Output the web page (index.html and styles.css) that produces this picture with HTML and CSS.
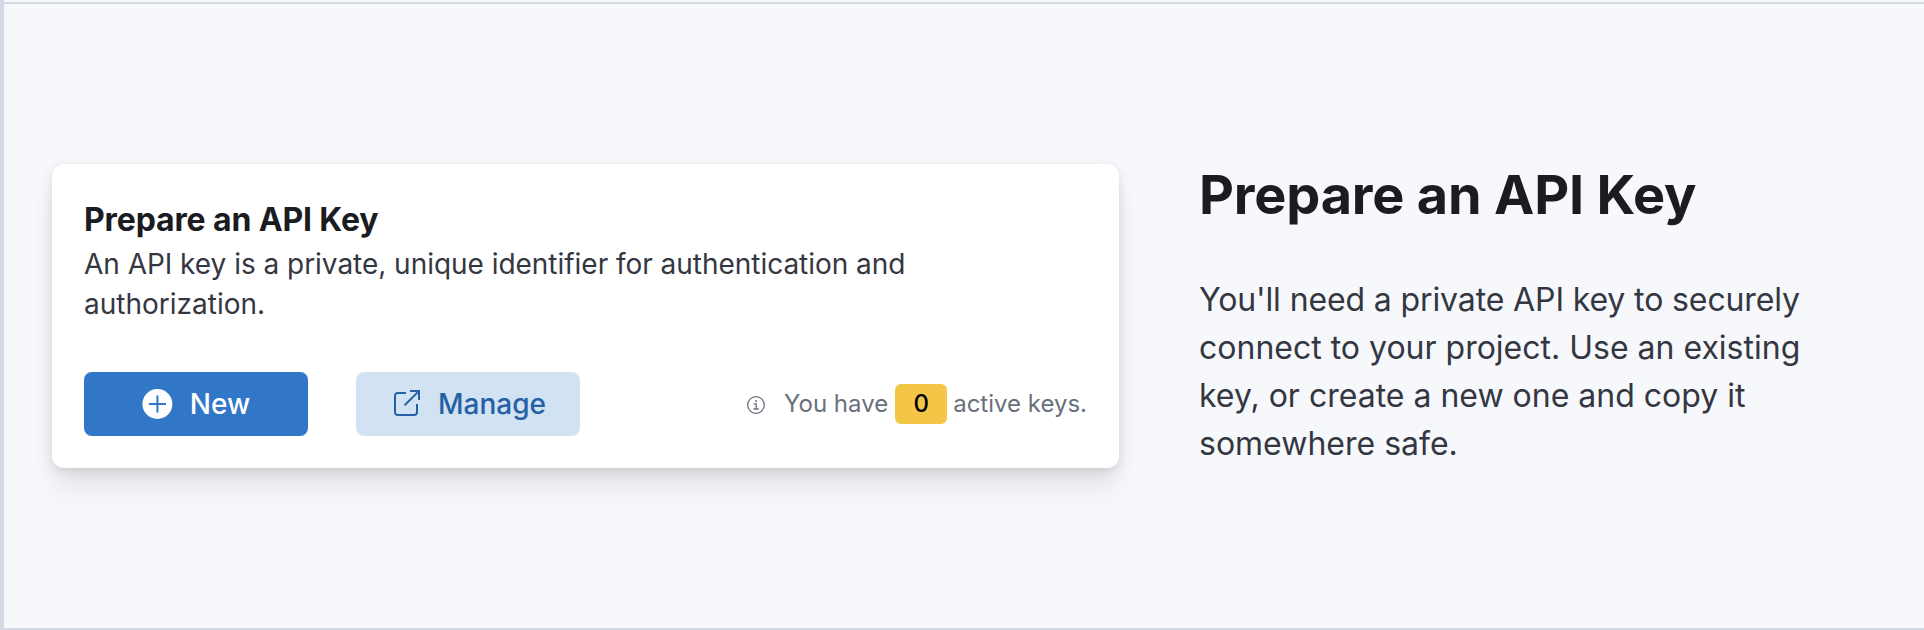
FILE: index.html
```html
<!DOCTYPE html>
<html lang="en">
<head>
<meta charset="utf-8">
<title>Prepare an API Key</title>
<link rel="stylesheet" href="styles.css">
</head>
<body>
<main class="section">
  <section class="panel">
    <h3 class="panel-title">Prepare an API Key</h3>
    <p class="panel-text">An API key is a private, unique identifier for authentication and authorization.</p>
    <div class="actions">
      <button class="button button-fill">
        <svg class="icon" viewBox="0 0 16 16"><circle cx="7.7" cy="8" r="7.5" fill="#fff"/><path d="M7.7 3.7v8.6M3.4 8h8.6" stroke="#3276c8" stroke-width="1"/></svg>
        <span>New</span>
      </button>
      <button class="button button-light">
        <svg class="icon" viewBox="0 0 16 16" fill="none" stroke="currentColor"><path d="M8 2.5H4A1.5 1.5 0 0 0 2.5 4v8A1.5 1.5 0 0 0 4 13.5h8a1.5 1.5 0 0 0 1.5-1.5V8"/><path d="M10 1.5h4.5V6M14.3 1.7 7.3 8.6"/></svg>
        <span>Manage</span>
      </button>
      <div class="status">
        <svg class="status-icon" viewBox="0 0 18 18" fill="none" stroke="currentColor" stroke-width="1.3"><circle cx="9" cy="9" r="8.3"/><path d="M6.6 7.8h2.6v5M6.4 13h5.4"/><circle cx="9" cy="5" r="1" fill="currentColor" stroke="none"/></svg>
        <span>You have</span><span class="badge">0</span><span>active keys.</span>
      </div>
    </div>
  </section>
  <section class="intro">
    <h2 class="intro-title">Prepare an API Key</h2>
    <p class="intro-text">You'll need a private API key to securely connect to your project. Use an existing key, or create a new one and copy it somewhere safe.</p>
  </section>
</main>
</body>
</html>
```
FILE: styles.css
```css
* { box-sizing: border-box; margin: 0; }
body {
  background: #f7f8fc;
  color: #343741;
  font-family: Inter, "Liberation Sans", sans-serif;
}
.section {
  display: flex;
  align-items: flex-start;
  gap: 80px;
  height: 630px;
  padding: 160px 80px 0 48px;
  border-left: 4px solid #d3dae6;
  border-bottom: 2px solid #d3dae6;
  background: linear-gradient(#d3dae6, #d3dae6) 0 2px / 100% 2px no-repeat;
}
.panel {
  flex: none;
  width: 1067px;
  height: 304px;
  margin-top: 4px;
  padding: 32px;
  border-radius: 12px;
  background: #fff;
  box-shadow: 0 1.8px 8px -1px rgba(0, 0, 0, .08), 0 5.2px 16px -1px rgba(0, 0, 0, .06), 0 11.4px 24px -1px rgba(0, 0, 0, .05), 0 30px 30px -1px rgba(0, 0, 0, .04);
}
.panel-title {
  color: #1a1c21;
  font-size: 32px;
  line-height: 48px;
  font-weight: 700;
  letter-spacing: -.13px;
}
.panel-text { font-size: 28px; line-height: 40px; max-width: 900px; }
.panel-text::first-line { letter-spacing: -.03px; }
.actions { display: flex; align-items: center; margin-top: 48px; }
.button {
  display: flex;
  align-items: center;
  justify-content: center;
  gap: 16px;
  width: 224px;
  height: 64px;
  margin-right: 48px;
  padding: 0;
  border: 0;
  border-radius: 8px;
  font: 500 28px/40px Inter, "Liberation Sans", sans-serif;
}
.button-fill { background: #3276c8; color: #fff; }
.button-light { background: #d1e2f2; color: #2660a4; }
.icon { width: 32px; height: 32px; }
.status {
  display: flex;
  align-items: center;
  margin-left: auto;
  color: #69707d;
  font-size: 24px;
  line-height: 38px;
  white-space: nowrap;
}
.status-icon { width: 18px; height: 18px; margin: 1px 19px 0 0; }
.badge {
  width: 52px;
  height: 40px;
  margin: 0 6px 0 7px;
  border-radius: 6px;
  background: #f3c648;
  color: #000;
  font-weight: 500;
  line-height: 40px;
  text-align: center;
}
.intro { width: 630px; }
.intro-title {
  color: #1a1c21;
  font-size: 54px;
  line-height: 70px;
  font-weight: 700;
  letter-spacing: -.19px;
}
.intro-text { margin-top: 46px; font-size: 32px; line-height: 48px; }
.intro-text::first-line { letter-spacing: -.12px; }
```
